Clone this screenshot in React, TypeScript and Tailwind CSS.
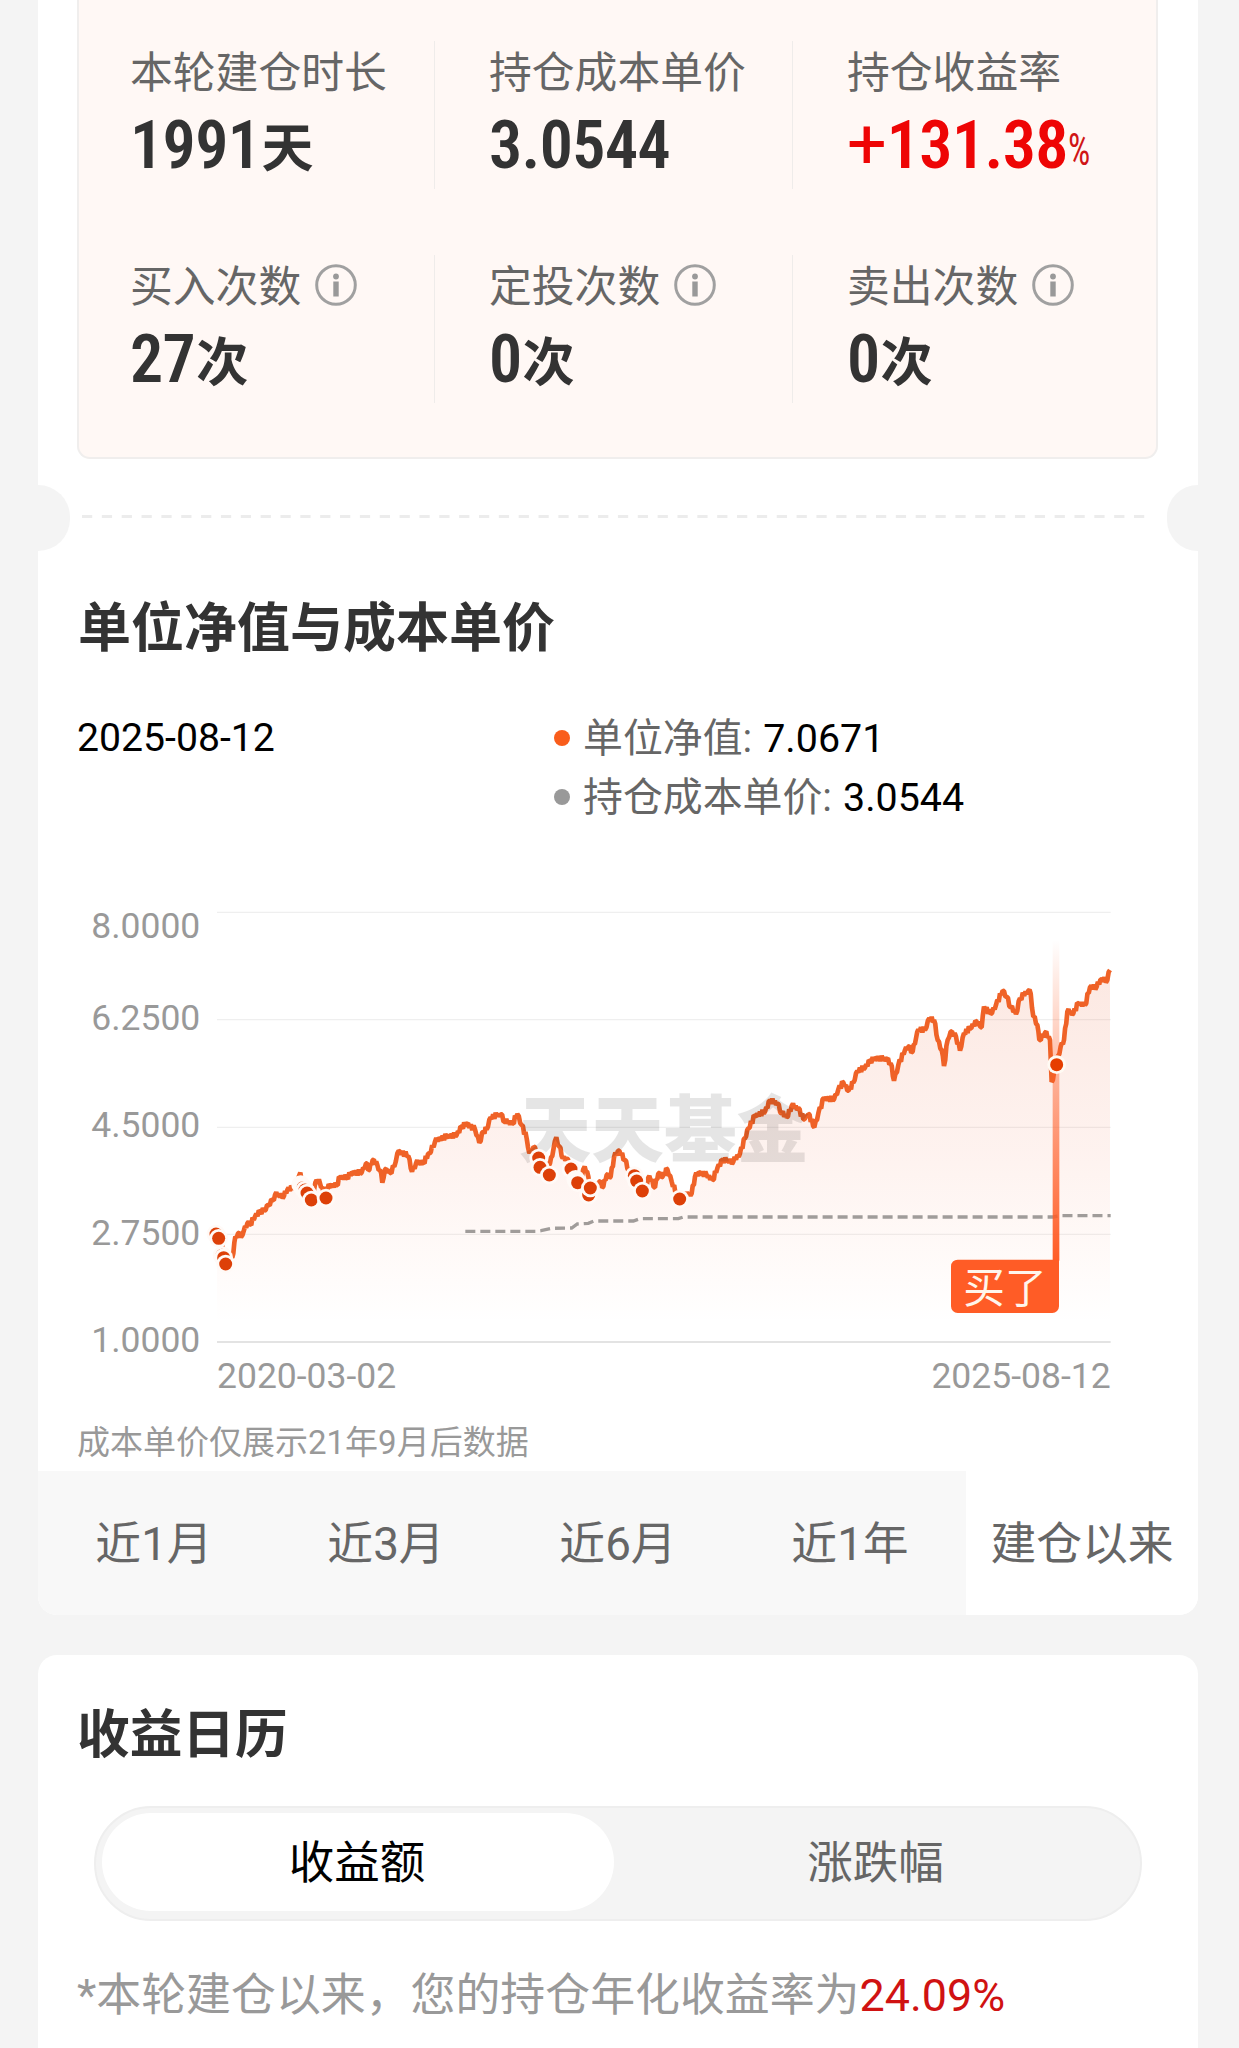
import type { ReactNode } from "react";

type Point = [number, number];

/* Net value history. Chart units are thirds of a pixel. */
const netValue: Point[] = [
  [471, 1025], [476, 1045], [490, 1080], [497, 1120], [510, 1110], [520, 1090], [526, 1040], [534, 1030], [543, 1042],
  [552, 1020], [562, 1000], [570, 1003], [585, 980], [600, 965], [613, 962], [625, 945], [638, 930], [645, 915],
  [672, 918], [682, 900], [697, 893], [712, 880], [721, 848], [728, 880], [745, 895], [762, 900], [770, 870],
  [780, 880], [790, 905], [810, 888], [830, 885], [840, 862], [860, 862], [880, 848], [905, 848], [918, 820],
  [928, 840], [938, 810], [952, 825], [960, 840], [967, 878], [975, 838], [990, 848], [1003, 830], [1012, 790],
  [1020, 785], [1045, 798], [1056, 845], [1068, 820], [1090, 818], [1108, 790], [1125, 755], [1140, 746],
  [1160, 740], [1190, 735], [1205, 710], [1220, 702], [1245, 718], [1258, 758], [1270, 725], [1280, 718],
  [1292, 682], [1322, 673], [1335, 695], [1358, 700], [1372, 672], [1385, 705], [1400, 745], [1408, 790],
  [1425, 772], [1440, 810], [1455, 830], [1470, 820], [1480, 780], [1489, 742], [1498, 770], [1508, 805],
  [1520, 805], [1533, 835], [1545, 855], [1565, 865], [1574, 830], [1585, 860], [1592, 895], [1618, 875],
  [1630, 890], [1640, 855], [1652, 860], [1662, 802], [1678, 782], [1695, 810], [1702, 835], [1720, 850],
  [1740, 880], [1758, 888], [1768, 858], [1785, 892], [1795, 850], [1808, 860], [1822, 838], [1835, 875],
  [1850, 910], [1865, 920], [1895, 910], [1905, 860], [1920, 848], [1940, 855], [1958, 870], [1972, 835],
  [1988, 810], [2020, 815], [2040, 790], [2055, 745], [2065, 715], [2085, 678], [2115, 665], [2130, 632],
  [2152, 640], [2165, 670], [2180, 682], [2195, 648], [2215, 655], [2230, 688], [2245, 672], [2263, 712],
  [2275, 670], [2292, 625], [2322, 628], [2335, 598], [2350, 578], [2366, 602], [2380, 578], [2392, 543],
  [2415, 533], [2430, 513], [2450, 505], [2480, 507], [2492, 520], [2502, 572], [2515, 525], [2535, 480],
  [2545, 470], [2558, 485], [2568, 445], [2575, 418], [2595, 420], [2608, 385], [2622, 390], [2633, 450],
  [2645, 480], [2652, 528], [2663, 450], [2672, 425], [2688, 440], [2700, 482], [2712, 430], [2730, 415],
  [2750, 395], [2765, 412], [2772, 350], [2792, 372], [2808, 345], [2828, 302], [2840, 320], [2852, 352],
  [2868, 372], [2880, 325], [2905, 302], [2912, 310], [2920, 380], [2932, 405], [2938, 450], [2955, 428],
  [2970, 450], [2975, 576], [2990, 525], [3002, 470], [3012, 450], [3022, 365], [3040, 370], [3055, 340],
  [3075, 345], [3090, 292], [3110, 290], [3125, 268], [3142, 270], [3150, 240],
];

const costPrice: Point[] = [
  [1216, 1024], [1430, 1024], [1443, 1022], [1475, 1015], [1535, 1014], [1552, 1002], [1585, 1000], [1602, 993],
  [1720, 993], [1740, 986], [1855, 986], [1870, 981], [2980, 981], [3000, 977], [3152, 977],
];

const buyMarks: Point[] = [
  [468, 1032], [476, 1045], [486, 1096], [491, 1103], [497, 1122], [722, 884], [729, 893], [735, 900], [741, 909],
  [754, 930], [798, 924], [1436, 804], [1440, 832], [1468, 855], [1533, 837], [1547, 868], [1553, 878],
  [1586, 915], [1591, 894], [1723, 857], [1730, 873], [1747, 903], [1859, 927],
];

const hiddenMarks = new Set([5, 15]);

const gridLines = [67, 389, 712, 1033];
const axisLabels: [string, number][] = [
  ["8.0000", 145], ["6.2500", 419], ["4.5000", 741], ["2.7500", 1064], ["1.0000", 1386],
];

/* Adds the fine day-to-day wobble between the recorded points. */
function withTicks(points: Point[]): Point[] {
  const out: Point[] = [points[0]];
  let n = 0;
  for (let i = 1; i < points.length; i++) {
    const [x0, y0] = points[i - 1];
    const [x1, y1] = points[i];
    const steps = Math.max(1, Math.round((x1 - x0) / 4));
    for (let s = 1; s <= steps; s++) {
      const t = s / steps;
      const wobble = s === steps ? 0 : (n++ % 2 ? 1 : -1) * (4 + ((n * 7) % 6));
      out.push([x0 + (x1 - x0) * t, y0 + (y1 - y0) * t + wobble]);
    }
  }
  return out;
}

const toPath = (points: Point[]) => "M" + points.map(([x, y]) => `${x.toFixed(1)} ${y.toFixed(1)}`).join("L");
const linePath = toPath(withTicks(netValue));

function InfoIcon() {
  return (
    <svg viewBox="0 0 42 42" className="mb-1 ml-[14px] h-[42px] w-[42px] shrink-0" fill="none">
      <circle cx="21" cy="21" r="19.3" stroke="#a0a0a0" strokeWidth="3" />
      <circle cx="21" cy="12.5" r="2.9" fill="#999" />
      <path d="M21 17.5V32.5" stroke="#999" strokeWidth="5.4" />
    </svg>
  );
}

function Stat({ label, info, children }: { label: string; info?: boolean; children: ReactNode }) {
  return (
    <div className="h-[148px] border-r border-[#efecea] pt-[2px] pl-[54px] last:border-r-0 nth-[3]:border-r-0 nth-[3n+1]:pl-[51px]">
      <div className="flex h-[60px] items-center text-[42.8px] leading-[60px] text-[#666]">
        {label}
        {info && <InfoIcon />}
      </div>
      <div className="mt-[13px] flex h-[60px] items-baseline leading-[60px] font-bold whitespace-nowrap text-[#333]">
        {children}
      </div>
    </div>
  );
}

function Num({ children }: { children: ReactNode }) {
  return <span className="text-[66px] font-semibold tracking-[-0.6px] [font-stretch:82%]">{children}</span>;
}

function Unit({ children }: { children: ReactNode }) {
  return <span className="relative -top-[1px] ml-px text-[52px]">{children}</span>;
}

function Chart() {
  return (
    <svg viewBox="-66 0 3480 1545" className="block h-[515px] w-[1160px]" fill="none">
      <defs>
        <linearGradient id="area" gradientUnits="userSpaceOnUse" x1="0" y1="240" x2="0" y2="1300">
          <stop offset="0" stopColor="#e8501e" stopOpacity="0.13" />
          <stop offset="0.5" stopColor="#f0643c" stopOpacity="0.085" />
          <stop offset="1" stopColor="#ff6a33" stopOpacity="0" />
        </linearGradient>
        <linearGradient id="beam" x1="0" y1="0" x2="0" y2="1">
          <stop offset="0" stopColor="#ff5c26" stopOpacity="0" />
          <stop offset="1" stopColor="#ff5c26" />
        </linearGradient>
      </defs>

      {gridLines.map((y) => (
        <path key={y} d={`M471 ${y}H3152`} stroke="#efefef" strokeWidth="3.5" />
      ))}
      <path d={`${linePath}V1354H471Z`} fill="url(#area)" />
      <path d="M471 1356H3152" stroke="#dadada" strokeWidth="5" />

      <path d={linePath} stroke="#ef6227" strokeWidth="14" strokeLinejoin="bevel" />
      <path d={toPath(costPrice)} stroke="#a09c9a" strokeWidth="10" strokeDasharray="30 15" />

      <text x="1376" y="798" fontSize="218" fontWeight="900" fill="#000" fillOpacity="0.1">
        天天基金
      </text>

      <rect x="2978" y="150" width="20" height="962" fill="url(#beam)" />
      <path
        d="M2691 1109H2997V1249A20 20 0 0 1 2977 1269H2693A20 20 0 0 1 2673 1249V1129A20 20 0 0 1 2693 1109Z"
        fill="#ff5c26"
      />
      <text x="2710" y="1238" fontSize="125" fill="#fff5ec">
        买了
      </text>

      {buyMarks.map(([x, y], i) => (
        <g key={i}>
          <circle cx={x} cy={y} r="28" fill="#fffaf7" />
          {!hiddenMarks.has(i) && <circle cx={x} cy={y} r="19.5" fill="#dd4008" />}
        </g>
      ))}
      <circle cx="2990" cy="524" r="28" fill="#fffaf3" />
      <circle cx="2990" cy="524" r="19.5" fill="#e63e00" />

      <g fill="#999" fontSize="106.5">
        {axisLabels.map(([text, y]) => (
          <text key={text} x="421" y={y} textAnchor="end">
            {text}
          </text>
        ))}
        <text x="471" y="1494">2020-03-02</text>
        <text x="3152" y="1494" textAnchor="end">2025-08-12</text>
      </g>
    </svg>
  );
}

function LegendRow({ dot, label, value }: { dot: ReactNode; label: string; value: string }) {
  return (
    <div className="flex h-[59px] items-center text-[39.9px] leading-[59px]">
      {dot}
      <span className="mt-[2px] ml-[13px] text-[#666]">{label}:</span>
      <span className="mt-[2px] ml-[11px] text-[39.4px] text-black">{value}</span>
    </div>
  );
}

const ranges = ["近1月", "近3月", "近6月", "近1年", "建仓以来"];

export default function App() {
  return (
    <div className="h-[2048px] w-[1239px] overflow-hidden bg-[#f4f4f4] pr-[41px] pl-[38px] font-[Roboto,'Noto_Sans_CJK_SC',sans-serif]">
      <section className="flex h-[1615px] flex-col overflow-hidden rounded-b-[19px] bg-white">
        <div className="ml-[39px] grid h-[459px] w-[1081px] grid-cols-[356px_358px_1fr] content-start gap-y-[66px] rounded-b-[13px] border-2 border-t-0 border-[#f0eeed] bg-[#fff8f5] pt-[41px]">
          <Stat label="本轮建仓时长">
            <Num>1991</Num>
            <Unit>天</Unit>
          </Stat>
          <Stat label="持仓成本单价">
            <Num>3.0544</Num>
          </Stat>
          <Stat label="持仓收益率">
            <span className="text-[#ee0505]">
              <span className="text-[70px] leading-[50px] font-normal [font-stretch:100%]">+</span>
              <Num>131.38</Num>
              <span className="relative -top-[3px] inline-block w-[22px] origin-left scale-x-[0.8] text-[44px] leading-[50px] font-normal text-[#d01515] [font-stretch:75%]">
                %
              </span>
            </span>
          </Stat>
          <Stat label="买入次数" info>
            <Num>27</Num>
            <Unit>次</Unit>
          </Stat>
          <Stat label="定投次数" info>
            <Num>0</Num>
            <Unit>次</Unit>
          </Stat>
          <Stat label="卖出次数" info>
            <Num>0</Num>
            <Unit>次</Unit>
          </Stat>
        </div>

        <div className="mt-[26px] flex h-[66px] items-center">
          <div className="h-[66px] w-[32px] rounded-r-full bg-[#f4f4f4]" />
          <svg viewBox="0 0 1064 3" className="mb-1 ml-[12px] h-[3px] w-[1064px]">
            <path d="M0 1.5H1064" stroke="#ececec" strokeWidth="3" strokeDasharray="10.2 9.65" />
          </svg>
          <div className="ml-auto h-[66px] w-[31px] rounded-l-full bg-[#f4f4f4]" />
        </div>

        <h2 className="mt-[42px] ml-[40px] h-[72px] text-[53px] leading-[72px] font-bold text-[#333]">单位净值与成本单价</h2>

        <div className="mt-[43px] ml-[39px] flex h-[118px]">
          <div className="w-[477px] pt-px text-[39.2px] leading-[59px] text-black">2025-08-12</div>
          <div>
            <LegendRow
              dot={<span className="h-4 w-4 rounded-full bg-[#f95d1b]" />}
              label="单位净值"
              value="7.0671"
            />
            <LegendRow
              dot={<span className="h-4 w-4 rounded-full bg-[#999]" />}
              label="持仓成本单价"
              value="3.0544"
            />
          </div>
        </div>

        <div className="mt-[64px]">
          <Chart />
        </div>

        <p className="mt-[13px] ml-[39px] h-[50px] text-[33px] leading-[50px] text-[#999]">成本单价仅展示21年9月后数据</p>

        <div className="mt-auto grid h-[144px] grid-cols-5 text-center text-[45.8px] leading-[148px] text-[#666]">
          {ranges.map((range) => (
            <button key={range} className="bg-[#f8f8f8] whitespace-nowrap last:bg-white">
              {range}
            </button>
          ))}
        </div>
      </section>

      <section className="mt-10 h-[393px] rounded-t-[19px] bg-white pt-[44px]">
        <h2 className="ml-[39px] h-[72px] text-[52.7px] leading-[72px] font-bold text-[#333]">收益日历</h2>

        <div className="mt-[35px] ml-[56px] flex h-[115px] w-[1048px] rounded-full border-2 border-[#eee] bg-[#f4f4f4] pt-[5px] pl-[6px] text-center text-[45.5px] text-[#666]">
          <div className="h-[98px] w-[512px] rounded-full bg-white pr-[2px] leading-[101px] text-black">收益额</div>
          <div className="h-[98px] flex-1 pr-[3px] leading-[101px]">涨跌幅</div>
        </div>

        <p className="mt-[45px] ml-[39px] h-[60px] text-[44.9px] leading-[60px] whitespace-nowrap text-[#999]">
          *本轮建仓以来，您的持仓年化收益率为<span className="text-[#d01212]">24.09%</span>
        </p>
      </section>
    </div>
  );
}
